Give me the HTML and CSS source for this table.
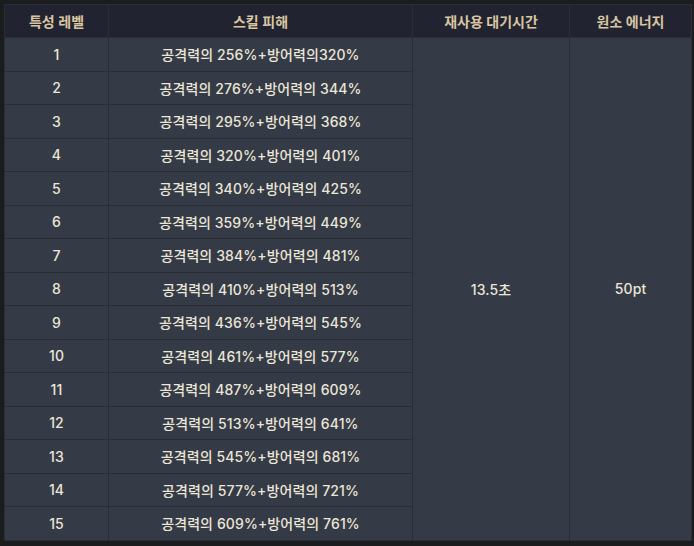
FILE: index.html
```html
<!DOCTYPE html>
<html lang="ko">
<head>
<meta charset="utf-8">
<link rel="stylesheet" href="styles.css">
</head>
<body>
<table class="skill-table">
  <colgroup>
    <col class="c1"><col class="c2"><col class="c3"><col class="c4">
  </colgroup>
  <thead>
    <tr><th>특성 레벨</th><th>스킬 피해</th><th>재사용 대기시간</th><th>원소 에너지</th></tr>
  </thead>
  <tbody>
    <tr><td>1</td><td>공격력의 256%+방어력의320%</td><td rowspan="15">13.5초</td><td rowspan="15">50pt</td></tr>
    <tr><td>2</td><td>공격력의 276%+방어력의 344%</td></tr>
    <tr><td>3</td><td>공격력의 295%+방어력의 368%</td></tr>
    <tr><td>4</td><td>공격력의 320%+방어력의 401%</td></tr>
    <tr><td>5</td><td>공격력의 340%+방어력의 425%</td></tr>
    <tr><td>6</td><td>공격력의 359%+방어력의 449%</td></tr>
    <tr><td>7</td><td>공격력의 384%+방어력의 481%</td></tr>
    <tr><td>8</td><td>공격력의 410%+방어력의 513%</td></tr>
    <tr><td>9</td><td>공격력의 436%+방어력의 545%</td></tr>
    <tr><td>10</td><td>공격력의 461%+방어력의 577%</td></tr>
    <tr><td>11</td><td>공격력의 487%+방어력의 609%</td></tr>
    <tr><td>12</td><td>공격력의 513%+방어력의 641%</td></tr>
    <tr><td>13</td><td>공격력의 545%+방어력의 681%</td></tr>
    <tr><td>14</td><td>공격력의 577%+방어력의 721%</td></tr>
    <tr><td>15</td><td>공격력의 609%+방어력의 761%</td></tr>
  </tbody>
</table>
</body>
</html>
```
FILE: styles.css
```css
html, body {
  margin: 0;
  padding: 0;
  background: #1b1c1e;
}
body {
  padding: 4px 3px 0 4px;
  font-family: Inter, "Noto Sans CJK KR", sans-serif;
  font-size: 14px;
}
.skill-table {
  border-collapse: collapse;
  width: 687px;
  table-layout: fixed;
  background: #343a46;
  border: 1px solid #33363d;
}
.c1 { width: 104px; }
.c2 { width: 304px; }
.c3 { width: 157px; }
.c4 { width: 122px; }
th, td {
  border: 1px solid #2a2d34;
  text-align: center;
  vertical-align: middle;
  padding: 0;
}
th {
  height: 32px;
  background: #222330;
  color: #d8c6a2;
  font-weight: 600;
}
td {
  height: 32.5px;
  color: #ebe6d6;
  font-weight: 500;
  letter-spacing: 0.1px;
}
```
